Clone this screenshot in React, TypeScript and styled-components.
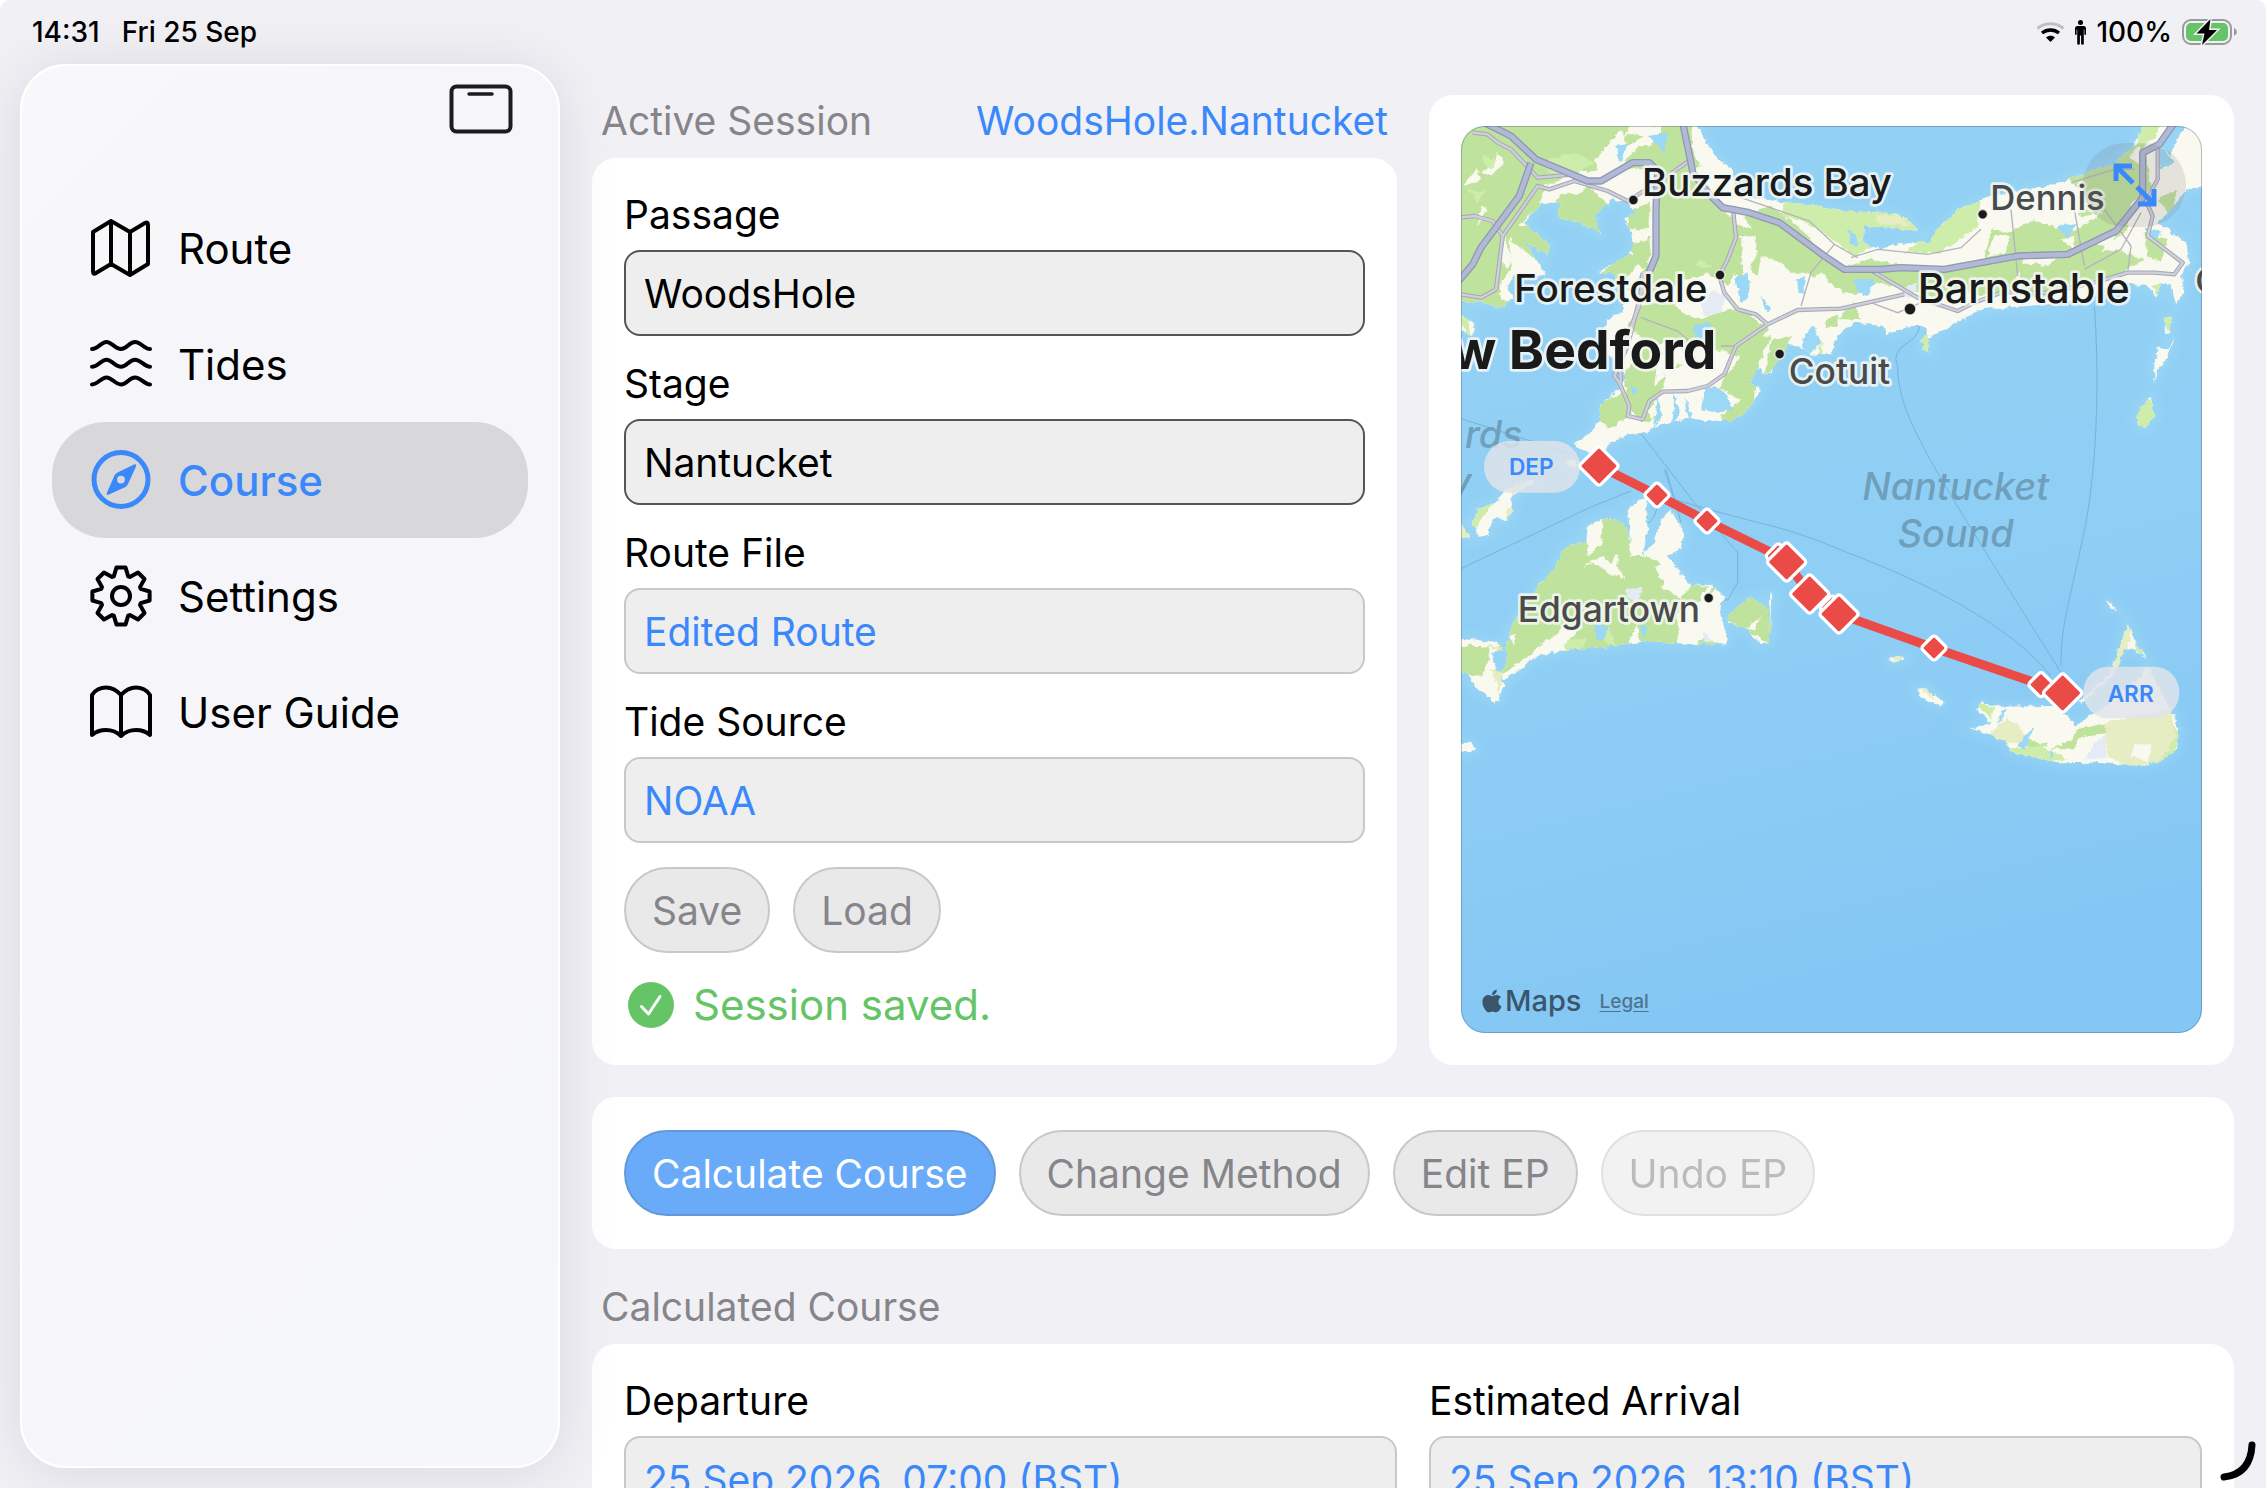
import React from "react";
import styled, { createGlobalStyle, css } from "styled-components";
import { FaApple } from "react-icons/fa6";

const color = {
  page: "#f1f0f5",
  card: "#ffffff",
  blue: "#3b88fa",
  blueFill: "#6aabf9",
  grey: "#85858a",
  field: "#eeeeee",
  button: "#e9e9ea",
  line: "#c8c8ca",
  green: "#64c466",
  red: "#eb4b47",
};

const GlobalStyle = createGlobalStyle`
  *, *::before, *::after { box-sizing: border-box; }
  body {
    margin: 0;
    background: #ffffff;
    color: #000000;
    font-family: "Inter", "Liberation Sans", sans-serif;
    font-size: 39px;
  }
  button, input { font: inherit; }
`;

const Screen = styled.div`
  position: relative;
  display: flex;
  flex-direction: column;
  height: 100vh;
  overflow: hidden;
  background: ${color.page};
  border-radius: 10px 10px 0 0;
`;

const StatusBar = styled.header`
  display: flex;
  flex: none;
  align-items: center;
  justify-content: space-between;
  height: 64px;
  padding: 0 28px 0 32px;
  font-size: 28px;
  font-weight: 500;
`;

const StatusGroup = styled.div<{ $gap: number }>`
  display: flex;
  align-items: center;
  gap: ${(p) => p.$gap}px;
`;

const Shell = styled.div`
  display: grid;
  grid-template-columns: 540px minmax(0, 1fr);
  gap: 32px;
  flex: 1;
  min-height: 0;
  padding: 0 32px 0 20px;
`;

const Sidebar = styled.aside`
  position: relative;
  z-index: 1;
  margin-bottom: 20px;
  padding: 0 30px;
  border: 2px solid #ffffff;
  border-radius: 46px;
  background: linear-gradient(135deg, #f8f8fa 0%, #f5f5fa 40%, #f6f7fb 100%);
  box-shadow: 0 4px 60px rgba(20, 20, 40, 0.1);
`;

const SidebarTop = styled.div`
  display: flex;
  justify-content: flex-end;
  height: 124px;
  padding: 16px 15px 0 0;
`;

const IconButton = styled.button`
  display: block;
  height: 54px;
  padding: 0;
  border: 0;
  background: none;
  cursor: pointer;
`;

const NavItem = styled.a<{ $active?: boolean }>`
  display: flex;
  align-items: center;
  gap: 24px;
  height: 116px;
  padding: 0 36px;
  border-radius: 54px;
  color: #000000;
  font-size: 42px;
  text-decoration: none;
  ${(p) =>
    p.$active &&
    css`
      background: #d8d8da;
      color: ${color.blue};
      font-weight: 500;
    `}
`;

const NavIcon = styled.svg`
  width: 66px;
  height: 66px;
  fill: none;
  stroke: currentColor;
  stroke-width: 4;
  stroke-linecap: round;
  stroke-linejoin: round;
`;

const Main = styled.main`
  display: flex;
  flex-direction: column;
  gap: 32px;
  min-height: 0;
  padding-top: 31px;
`;

const TopRow = styled.div`
  display: grid;
  flex: none;
  grid-template-columns: minmax(0, 1fr) minmax(0, 1fr);
  gap: 32px;
`;

const Section = styled.section`
  display: flex;
  flex: none;
  flex-direction: column;
`;

const SectionHead = styled.div`
  display: flex;
  justify-content: space-between;
  height: 63px;
  padding: 0 9px;
  color: ${color.grey};
  line-height: 52px;
`;

const SectionTitle = styled.h2`
  margin: 0;
  font: inherit;
`;

const SessionName = styled.span`
  color: ${color.blue};
`;

const Card = styled.div`
  display: flex;
  flex-direction: column;
  gap: 24px;
  padding: 32px;
  border-radius: 24px;
  background: ${color.card};
`;

const Fields = styled.div`
  display: flex;
  flex-direction: column;
  gap: 23px;
`;

const FieldColumns = styled.div`
  display: grid;
  grid-template-columns: minmax(0, 1fr) minmax(0, 1fr);
  gap: 32px;
`;

const FieldBox = styled.div`
  display: flex;
  flex-direction: column;
  gap: 10px;
`;

const Label = styled.label`
  line-height: 50px;
`;

const TextInput = styled.input`
  width: 100%;
  height: 86px;
  padding: 0 18px;
  border: 2px solid #555558;
  border-radius: 16px;
  outline: 0;
  background: ${color.field};
  color: #000000;
  &:read-only {
    border-color: ${color.line};
    color: ${color.blue};
  }
`;

const Buttons = styled.div`
  display: flex;
  flex-wrap: wrap;
  gap: 23px;
`;

const PillButton = styled.button<{ $primary?: boolean }>`
  height: 86px;
  padding: 0 26px;
  border: 2px solid ${(p) => (p.$primary ? "#6299d6" : color.line)};
  border-radius: 43px;
  background: ${(p) => (p.$primary ? color.blueFill : color.button)};
  color: ${(p) => (p.$primary ? "#ffffff" : color.grey)};
  cursor: pointer;
  &:disabled {
    opacity: 0.55;
    cursor: default;
  }
`;

const Saved = styled.p`
  display: flex;
  align-items: center;
  gap: 18px;
  margin: 0;
  padding-left: 3px;
  color: ${color.green};
  font-size: 42px;
  line-height: 56px;
`;

const MapCard = styled(Card)`
  padding: 31px 32px 32px;
`;

const ActionCard = styled(Card)`
  flex: none;
  padding: 33px 32px;
`;

const MapFrame = styled.div`
  position: relative;
  flex: 1;
  min-height: 400px;
  overflow: hidden;
  border-radius: 24px;
  background: #8ccdf5;
  &::after {
    content: "";
    position: absolute;
    inset: 0;
    border: 1px solid rgba(60, 80, 100, 0.35);
    border-radius: 24px;
    pointer-events: none;
  }
`;

const MapDrawing = styled.svg`
  position: absolute;
  inset: 0;
  width: 100%;
  height: 100%;
`;

const ExpandButton = styled.button`
  position: absolute;
  top: 17px;
  right: 16px;
  display: grid;
  place-items: center;
  width: 103px;
  height: 84px;
  padding: 0;
  border: 0;
  border-radius: 42px;
  background: rgba(110, 110, 120, 0.16);
  cursor: pointer;
`;

const MapCredit = styled.div`
  position: absolute;
  bottom: 12px;
  left: 18px;
  display: flex;
  align-items: center;
  gap: 18px;
  color: #3a566b;
`;

const MapBrand = styled.span`
  display: flex;
  align-items: center;
  font-size: 29px;
  font-weight: 500;
  line-height: 40px;
`;

const LegalLink = styled.a`
  color: #4d748e;
  font-size: 19px;
  font-weight: 500;
  text-underline-offset: 3px;
`;

const CornerMark = styled.svg`
  position: absolute;
  right: 6px;
  bottom: 4px;
`;

const gearPath = (() => {
  const at = (deg: number, r: number) => {
    const a = (deg * Math.PI) / 180;
    return `${(33 + r * Math.sin(a)).toFixed(1)} ${(33 - r * Math.cos(a)).toFixed(1)}`;
  };
  const pts: string[] = [];
  for (let t = 0; t < 360; t += 45) {
    pts.push(at(t - 9, 29), at(t + 9, 29), at(t + 20, 21), at(t + 25, 21));
  }
  return `M${pts.join("L")}Z`;
})();

const navItems = [
  {
    name: "Route",
    icon: <path d="M5 17 23 6 42 17 57 8Q60 6.500 60 10V49L42 60 23 49 8 58Q5 60 5 56ZM23 6V49M42 17V60" />,
  },
  {
    name: "Tides",
    icon: (
      <>
        {[3, 20.7, 38.4].map((y) => (
          <path key={y} transform={`translate(0 ${y})`} d="M4 15C10 15 13 8 18.500 8S27 15 33 15S41 8 47 8S56 15 62 15" />
        ))}
      </>
    ),
  },
  {
    name: "Course",
    active: true,
    icon: (
      <>
        <circle cx="33" cy="32.5" r="27" strokeWidth="5" />
        <path
          fill="currentColor"
          stroke="none"
          fillRule="evenodd"
          d="M46 17.500Q49 16.500 48 19.500L40 37Q39 39 37.500 40L21 47.500Q17.500 49 19 45.500L26.500 28.500Q27.500 26.500 29.500 25.500ZM33 28.700A3.900 3.900 0 1 0 33 36.500A3.900 3.900 0 1 0 33 28.700Z"
        />
      </>
    ),
  },
  {
    name: "Settings",
    icon: (
      <>
        <path d={gearPath} />
        <circle cx="33" cy="33" r="9" />
      </>
    ),
  },
  {
    name: "User Guide",
    icon: (
      <path d="M33 16C28 10.500 23 8.500 18 8.500S7 11 4 16V56C8 52.500 13 51 18 51S29 53 33 57C37 53 43 51 48 51S58 52.500 62 56V16C59 11 53 8.500 48 8.500S38 10.500 33 16ZM33 16V57" />
    ),
  },
];

function WifiIcon() {
  return (
    <svg width="29" height="20" viewBox="0 0 29 20" fill="none" aria-label="Wi-Fi">
      <path d="M1.500 6.500C9 .3 20 .3 27.500 6.500" stroke="#bfbfc4" strokeWidth="3" />
      <path d="M6 11C11 7 18 7 23 11" stroke="#000" strokeWidth="3.500" />
      <path d="M14.500 20 10 15.500C12.500 13.300 16.500 13.300 19 15.500Z" fill="#000" />
    </svg>
  );
}

function PersonIcon() {
  return (
    <svg width="11" height="25" viewBox="0 0 11 25" aria-label="Focus">
      <circle cx="5.500" cy="2.500" r="2.500" />
      <path d="M2.500 6H8.500Q11 6 11 8.500V14Q11 15 10.200 15T9.400 14V9.500H8.800V23.500Q8.800 24.800 7.500 24.800T6.100 23.500V15.500H4.900V23.500Q4.900 24.800 3.500 24.800T2.200 23.500V9.500H1.600V14Q1.600 15 .8 15T0 14V8.500Q0 6 2.500 6Z" />
    </svg>
  );
}

function BatteryIcon() {
  return (
    <svg width="56" height="28" viewBox="0 0 56 28" aria-label="Battery charging">
      <rect x="1" y="2" width="48" height="24" rx="8" fill="none" stroke="#9b9b9f" strokeWidth="2" />
      <path d="M52 10Q55 11.500 55 14T52 18Z" fill="#9b9b9f" />
      <rect x="4" y="5" width="42" height="18" rx="5" fill={color.green} />
      <path d="M28.500 1 14.500 15.500H22.500L20 27 35 12H27Z" fill="#000" stroke={color.page} strokeWidth="3" paintOrder="stroke" />
    </svg>
  );
}

const land = "#faf9ef";
const wood = "#bfe29c";
const park = "#cfedaa";
const sand = "#e7edc2";
const water = "#9bd8f6";

const MotorwayEdge = styled.path`
  fill: none;
  stroke: #8f98b6;
  stroke-width: 22;
  stroke-linejoin: round;
`;
const MotorwayFill = styled.path`
  fill: none;
  stroke: #b2b9d5;
  stroke-width: 14;
  stroke-linejoin: round;
`;
const RoadEdge = styled.path`
  fill: none;
  stroke: #a5a7b5;
  stroke-width: 13;
  stroke-linejoin: round;
`;
const RoadFill = styled.path`
  fill: none;
  stroke: #cfd0dc;
  stroke-width: 7;
  stroke-linejoin: round;
`;
const LaneLine = styled.path`
  fill: none;
  stroke: #b3b4bf;
  stroke-width: 4;
`;
const FerryLine = styled.path`
  fill: none;
  stroke: #76b3d8;
  stroke-width: 3;
`;

const motorways = [
  "M70-10 150 30 225 100 380 165 420 165 515 110 565 110 590 135 585 250V390L560 450",
  "M-20 480 35 415 60 365 175 210 210 110",
  "M665-10 690 110 695 140 745 205 785 245 865 260 955 290 1090 390 1150 430 1260 430 1320 425 1450 430 1670 390 1820 385 1965 315 2045 215V80L2095 55 2140-10",
];
const roads = [
  "M35 20 80 25 110 50 150 70 230 155 340 145",
  "M690 100 620 150 500 225 440 195 340 165 265 190 230 180 125 330 105 490 60 515 0 505",
  "M-10 275 40 270 95 285 125 330",
  "M815 240 825 335 800 400 775 450 790 500 830 550 885 565 920 595",
  "M560 440 530 540 500 660 460 750 475 770 505 840 500 870 545 880 565 825 605 797 680 795 740 780 790 745 825 660 920 595 1010 552 1140 548 1330 505",
  "M545 440 535 540 475 690 480 770",
  "M1225 430 1370 515 1490 555 1540 530 1620 500 1760 500 1900 470 2000 440 2080 440 2140 445 2165 410 2060 330 2075 270 2055 225 2090 160V60",
];
const lanes = [
  "M840 215 1045 285 1120 355 1190 395M540 575 650 615 690 650M1120 355 1050 440 1020 540M780 660 825 660",
  "M1170 395 1250 370 1400 385 1500 365 1560 310M1650 250 1670 450M1870 420 1840 250M1930 250 2010 360 2000 440M2040 260 1980 370 1870 430M1830 170 1960 130 2020 130M1230 530 1310 560 1380 530",
];
const ferries = [
  "M1370 570Q1390 620 1340 650T1310 720C1310 870 1400 1000 1800 1640",
  "M1900 540C1920 820 1900 1100 1860 1260 1820 1450 1800 1500 1800 1620",
  "M545 870 530 910 700 1130 830 1280V1370L800 1422H770",
  "M0 878 350 990M0 1328 385 1145 510 1095",
  "M610 1030 640 1120C900 1200 950 1190 1160 1280 1400 1370 1650 1500 1770 1650",
  "M615 1030 660 1190M590 1120Q590 1180 550 1200",
];

const landShapes = [
  // Mainland, canal and the whole of the cape
  "M-20-20H700L737 50 767 97 812 127 817 160 837 205 937 225 1077 240 1160 256 1300 262 1340 280 1375 315 1280 305 1210 300 1200 350 1260 370 1310 355 1400 348 1437 302 1497 247 1577 215 1640 200 1717 190 1797 168 1877 140 1957 115 2007 70 2040 20 2050-20H2130L2100 60 2130 90 2150 30 2180 0 2230-20V180L2180 190 2130 250 2090 290 2120 310 2175 350 2185 410 2160 450 2170 500 2145 535 2130 480 2100 470 2090 515 2057 480 1997 472 1937 490 1877 520 1800 530 1700 540 1557 550 1507 578 1450 610 1400 635 1395 600 1347 600 1277 625 1265 600 1180 590 1130 630 1110 680 1060 690 1030 670 980 655 930 740 910 750 895 720 865 770 900 790 865 850 810 885 737 885 680 875 580 900 560 920 500 925 440 960 400 985 360 970 340 955 380 930 415 885 417 840 460 800 497 760 480 720 440 680 427 620 440 580 480 560 500 520 455 440 410 440 480 400 517 370 510 320 490 280 527 260 500 230 455 220 400 270 420 325 360 290 290 275 300 230 240 230 190 290 270 360 260 385 190 350 225 400 255 445 225 450 165 440 140 480 155 520 115 545 70 530-20 525Z",
  // Small headland on the western edge
  "M-20 570 25 580 45 610 30 630-20 600Z",
  // Elizabeth islands
  "M35 1190 50 1150 100 1130 150 1080 230 1060 150 1110 155 1160 135 1185 100 1170 80 1230 45 1225ZM-20 1190 5 1195 25 1235-20 1232ZM305 1010 350 1000 345 1030Z",
  // Martha's Vineyard
  "M137 1620 135 1570 150 1500 240 1370 280 1330 305 1275 355 1245 375 1250 380 1200 420 1180 460 1180 490 1195 510 1245 500 1150 540 1120 555 1115 560 1220 545 1290 590 1230 600 1180 630 1150 655 1190 667 1220 660 1270 620 1290 650 1330 690 1380 750 1375 790 1410 775 1450 800 1540 795 1555 700 1555 560 1545 450 1560 330 1570 230 1590 180 1630 130 1660 110 1640Z",
  "M800 1480 815 1455 870 1410 920 1450 925 1550 890 1550 860 1510 800 1490ZM-20 1545 40 1540 125 1555 125 1575 90 1580 100 1615 130 1680 115 1710-20 1620ZM20 1640 120 1710 105 1730 40 1680Z",
  "M928 1400 934 1400 930 1520 924 1520ZM-20 1850 30 1850 42 1872-20 1880Z",
  // Nantucket and its islets
  "M1545 1750 1560 1730 1620 1742 1780 1740 1830 1780 1840 1800 1920 1750 1980 1700 2040 1650 2062 1620 2080 1660 2130 1750 2155 1810 2145 1870 2110 1900 2050 1920 1900 1910 1790 1912 1730 1895 1660 1880 1620 1840 1530 1808 1590 1790Z",
  "M2000 1495 2020 1540 2057 1600 2020 1570 1990 1570 1960 1640 1860 1735 1850 1730 1950 1640ZM1932 1418 1968 1452 1950 1448ZM1285 1600 1315 1590 1332 1602 1290 1612ZM1365 1692 1395 1685 1450 1730 1435 1742 1390 1720Z",
  // Monomoy
  "M2110 580 2130 575 2125 625 2112 620ZM2140 630 2115 700 2085 740 2080 775 2080 720 2090 665 2120 670ZM2070 810 2080 870 2050 910 2025 890 2035 850Z",
  // Point south of Hyannis
  "M1380 640 1400 615 1440 610 1400 640 1405 680 1385 670Z",
];

const woodShapes = [
  "M-30-30H520L490 30 450 60 440 120 380 140 330 120 300 160 250 180 235 240 180 290 145 340 150 430 115 480 120 520 160 530 130 560-30 550Z",
  "M500 20 560 30 600-30H700L690 60 720 120 640 160 560 130 500 130 480 70Z",
  "M580 140 700 140 770 240 822 280 840 400 800 480 740 460 700 490 600 480 560 530 500 490 560 420 580 380Z",
  "M815 290 870 310 850 270 930 240 1020 310 1100 400 1160 420 1220 400 1420 430 1360 490 1240 470 1190 510 1130 490 1080 440 1020 480 960 410 900 390 890 450 820 450Z",
  "M540 540 620 520 680 570 720 580 800 550 860 560 920 610 860 700 800 680 720 660 660 690 620 650 560 660 500 600Z",
  "M490 740 560 650 630 690 570 740 620 710 680 720 700 690 750 740 710 790 640 770 590 810 600 870 545 890 500 840Z",
  "M820 720 870 640 930 630 890 720 880 800 880 910 790 910 780 870 840 820 800 800 750 780Z",
  "M420 830 490 800 510 860 450 910 410 880Z",
  "M265 240 310 200 350 210 380 180 450 240 430 310 400 330 350 300 290 300ZM150 300 240 300 290 365 240 410 150 345ZM410 450 500 380 540 400 490 470Z",
  "M510 250 570 230 560 310 500 310ZM510 350 570 330 560 430 510 410Z",
  "M1270 430 1440 440 1600 410 1690 390 1650 500 1560 510 1500 490 1440 520 1340 490Z",
  "M1590 310 1640 320 1720 280 1830 320 1900 280 1960 230 2020 190 2000 310 1910 380 1760 390 1660 400 1570 410Z",
  "M1770 120 1880 100 1960 80 2050 50 2070 190 1980 250 1850 270 1870 200Z",
  "M1670 410 1760 420 1800 390 1960 370 2050 400 1970 450 1860 470 1760 520 1690 510Z",
  "M1070 490 1125 470 1130 600 1095 610ZM930 640 990 630 960 710 910 750ZM1130 580 1180 530 1200 580Z",
  "M2050 320 2120 340 2100 410 2060 390ZM2090 220 2150 190 2130 270Z",
  "M100 1660 120 1500 220 1350 260 1310 300 1260 370 1230 390 1280 410 1190 460 1160 500 1190 510 1290 560 1290 620 1330 600 1380 660 1420 690 1380 740 1380 720 1420 650 1460 650 1530 640 1570 540 1570 530 1490 490 1580 350 1580 330 1560 310 1500 250 1550 190 1600Z",
  "M790 1480 870 1400 930 1440 930 1560 870 1520ZM-30 1560 80 1560 85 1600 60 1650-30 1640Z",
  "M1680 1850 1740 1820 1760 1860 1720 1870ZM1850 1810 1940 1790 1950 1820 1860 1830 1840 1870 1770 1870 1830 1840Z",
  "M725 1420 760 1370 800 1380 740 1400ZM690 1560 740 1530 790 1570Z",
];

const parkShapes = [
  "M980 200 1200 230 1400 260 1400 360 1290 330 1180 390 1130 350 1040 290 960 270Z",
  "M1430 310 1500 240 1560 210 1550 300 1440 380 1330 380 1400 330Z",
  "M260 100 340 80 400 110 340 145 260 140ZM60 90 110 100 90 150ZM20 190 70 200 50 230Z",
  "M700 420 720 400 760 430ZM2030-10 2110-30 2080 40 2030 60ZM2070 480 2100 470 2095 510Z",
  "M1540 1730 1600 1742 1590 1780ZM1620 1870 1740 1860 1820 1900 1700 1920ZM2120 1780 2160 1820 2130 1900 2060 1930Z",
  "M2100 570 2140 570 2125 625ZM2060 800 2090 870 2050 920 2015 890ZM30 1220 40 1150 110 1120 60 1180ZM2020 1520 2060 1600 2025 1570Z",
  "M1080 640 1090 730 1070 690ZM1400 700 1450 730 1435 742ZM1375 650 1395 610 1410 680 1385 680ZM-20 560 20 570 30 640Z",
  "M330 1600 300 1540 380 1540ZM420 1540 440 1500 470 1570Z",
];

const creamShapes = [
  "M110 80 130 110 90 150 60 140 100 120ZM50 130 60 160 10 180 20 160ZM60 240 80 250 50 300Z",
  "M400 100 440 60 480 10 500 60 560 20 600-10 600 40 560 60 540 60 470 120 420 140Z",
  "M450 190 520 170 530 230 470 240ZM515 330 560 310 560 340 530 350Z",
  "M130 330 150 400 140 430 120 400ZM650 470 740 440 800 480 790 530 700 520Z",
  "M840 330 880 330 890 380 870 420 900 500 960 440 1040 440 1150 500 1140 560 1060 600 990 620 930 620 890 560 850 540Z",
  "M1020 290 1100 340 1110 380 1060 350Z",
  "M590 690 650 660 680 700 640 720 610 750 580 780ZM620 730 780 690 800 740 770 800 700 850 610 840 570 880 560 860 600 800Z",
  "M377 1290 400 1195 425 1180 420 1260ZM365 1320 420 1290 450 1310 470 1280 470 1320 495 1362 440 1340 400 1310Z",
  "M580 1320 630 1310 620 1360 640 1410 610 1380ZM720 1400 790 1410 770 1440 785 1500 760 1550 720 1520Z",
  "M240 1550 330 1510 370 1500 300 1560 250 1580ZM140 1530 165 1525 160 1560ZM860 1505 900 1470 880 1510Z",
  "M1600 1745 1770 1742 1830 1800 1800 1860 1720 1850 1660 1790ZM2020 1850 2070 1860 2060 1910 2010 1890Z",
  "M1600 330 1650 330 1630 380 1580 390ZM1800 340 1840 330 1840 370ZM1900 350 1960 330 1950 370ZM2000 90 2040 60 2040 120Z",
];

const sandShapes = [
  "M1640 1770 1720 1790 1700 1850 1650 1850 1600 1880 1580 1830ZM1930 1790 2130 1750 2145 1830 2100 1900 2020 1930 1940 1890Z",
  "M2000 1490 2010 1540 1960 1640 1960 1580ZM1280 1590 1325 1590 1320 1612ZM1360 1680 1405 1690 1420 1720Z",
  "M90 1630 130 1640 115 1700ZM110 1560 125 1575 60 1560ZM1240 265 1320 270 1350 300 1260 295Z",
  "M150 1080 210 1060 150 1110ZM135 1150 160 1140 140 1190ZM-20 1180 30 1190 30 1240-20 1240Z",
];

const pondShapes = [
  "M820 460 860 440 865 510 840 530ZM1005 460 1035 450 1030 500 1010 505ZM700 600 740 590 760 630 700 640Z",
  "M1180 460 1240 460 1220 510 1190 500ZM1160 310 1190 330 1190 365 1170 350ZM900 510 930 550 915 560Z",
  "M730 790 760 780 790 800 820 850 770 860 720 850ZM1020 640 1060 600 1080 650 1040 690Z",
  "M590 810 605 870 580 900ZM640 800 655 870 635 890ZM670 810 690 860 680 880ZM505 770 530 790 520 810Z",
  "M1790 300 1850 290 1820 340ZM2050 300 2100 320 2080 350ZM2090 50 2140 110 2100 130ZM1900 500 1960 480 1980 500Z",
  "M1620 1760 1640 1750 1610 1800ZM1720 1800 1690 1870 1670 1860 1710 1810ZM1765 1880 1775 1860 1770 1900Z",
  "M400 1490 410 1545 430 1540 440 1500ZM535 1500 550 1545 560 1500ZM460 60 500 50 480 110ZM560 30 620 20 610 80Z",
];

const cities = [
  { name: "Buzzards Bay", x: 543, y: 210, size: 115, fill: "#1a1a1a" },
  { name: "Forestdale", x: 159, y: 527, size: 116, fill: "#1a1a1a" },
  { name: "w Bedford", x: 766, y: 730, size: 160, fill: "#1a1a1a", weight: 700, end: true },
  { name: "Cotuit", x: 983, y: 774, size: 106, fill: "#4a4a4a" },
  { name: "Dennis", x: 1588, y: 252, size: 104, fill: "#4a4a4a" },
  { name: "Barnstable", x: 1370, y: 532, size: 124, fill: "#1a1a1a" },
  { name: "Edgartown", x: 170, y: 1487, size: 106, fill: "#4a4a4a" },
  { name: "C", x: 2203, y: 500, size: 104, fill: "#4a4a4a" },
];

const cityDots = [
  [517, 222, 15],
  [777, 447, 15],
  [956, 684, 15],
  [1565, 265, 15],
  [1347, 549, 18],
  [743, 1416, 15],
];

const waypoints = [
  { x: 588, y: 1107 },
  { x: 738, y: 1185 },
  { x: 952, y: 1290 },
  { x: 1114, y: 1446 },
  { x: 1419, y: 1566 },
  { x: 1740, y: 1676 },
  { x: 414, y: 1020, major: true },
  { x: 977, y: 1308, major: true },
  { x: 1046, y: 1404, major: true },
  { x: 1134, y: 1464, major: true },
  { x: 1805, y: 1701, major: true },
];

const SeaNames = styled.g`
  fill: #709fbb;
  font-size: 113px;
  font-style: italic;
  font-weight: 500;
`;

function RouteMap() {
  return (
    <MapDrawing viewBox="0 0 2223 2721" preserveAspectRatio="xMinYMin slice" role="img" aria-label="Route map">
      <defs>
        <linearGradient id="sea" x1="0" y1="0" x2="0.2" y2="1">
          <stop offset="0" stopColor="#93d1f4" />
          <stop offset="0.55" stopColor="#90cff5" />
          <stop offset="1" stopColor="#85c7f4" />
        </linearGradient>
        <filter id="coast" x="-5%" y="-5%" width="110%" height="110%">
          <feTurbulence type="fractalNoise" baseFrequency="0.05" numOctaves="3" seed="7" />
          <feDisplacementMap in="SourceGraphic" scale="18" xChannelSelector="R" yChannelSelector="G" />
        </filter>
        <filter id="soft" x="-20%" y="-20%" width="140%" height="140%">
          <feGaussianBlur stdDeviation="16" />
        </filter>
        <clipPath id="shore">
          {landShapes.map((d) => (
            <path key={d} d={d} />
          ))}
        </clipPath>
      </defs>
      <rect width="2223" height="2721" fill="url(#sea)" />
      <g filter="url(#soft)" fill="#a0daf5" stroke="#a0daf5" strokeWidth="30" opacity="0.5">
        {landShapes.map((d) => (
          <path key={d} d={d} />
        ))}
      </g>
      {ferries.map((d) => (
        <FerryLine key={d} d={d} />
      ))}
      <g filter="url(#coast)">
        <path d={landShapes.join("")} fill={land} />
        <g clipPath="url(#shore)">
          <path d={woodShapes.join("")} fill={wood} />
          <path d={parkShapes.join("")} fill={park} />
          <path d={sandShapes.join("")} fill={sand} />
          <path d={creamShapes.join("")} fill={land} />
          <path d={pondShapes.join("")} fill={water} />
          <path
            d="M720 530 755 490 795 510 780 560 725 570ZM1310 490 1370 470 1350 520ZM495 1390 545 1385 530 1430 500 1420ZM1870 1900 1900 1850 1935 1830V1895ZM730 1520 760 1545 725 1550Z"
            fill="#e4ebf6"
          />
        </g>
      </g>
      {lanes.map((d) => (
        <LaneLine key={d} d={d} />
      ))}
      {roads.map((d) => (
        <RoadEdge key={d} d={d} />
      ))}
      {roads.map((d) => (
        <RoadFill key={d} d={d} />
      ))}
      {motorways.map((d) => (
        <MotorwayEdge key={d} d={d} />
      ))}
      {motorways.map((d) => (
        <MotorwayFill key={d} d={d} />
      ))}

      <SeaNames>
        <text x="1484" y="1122" textAnchor="middle">Nantucket</text>
        <text x="1484" y="1264" textAnchor="middle">Sound</text>
        <text x="184" y="965" textAnchor="end">rds</text>
        <text x="32" y="1106" textAnchor="end">y</text>
      </SeaNames>
      {cityDots.map(([x, y, r]) => (
        <circle key={x} cx={x} cy={y} r={r} fill="#1a1a1a" stroke="#fff" strokeOpacity="0.7" strokeWidth="5" />
      ))}
      {cities.map((c) => (
        <text
          key={c.name}
          x={c.x}
          y={c.y}
          fontSize={c.size}
          fontWeight={c.weight ?? 500}
          textAnchor={c.end ? "end" : "start"}
          fill={c.fill}
          stroke="#f4f8f4"
          strokeOpacity="0.85"
          strokeWidth="16"
          strokeLinejoin="round"
          paintOrder="stroke"
        >
          {c.name}
        </text>
      ))}

      <path
        d="M414 1020 588 1107 738 1185 952 1290 977 1308 1046 1404 1134 1464 1419 1566 1740 1676 1805 1701"
        fill="none"
        stroke={color.red}
        strokeWidth="27"
      />
      <g fontSize="68" fontWeight="600" textAnchor="middle">
        <rect x="69" y="945" width="288" height="155" rx="76" fill="#dfe4ea" fillOpacity="0.84" />
        <text x="211" y="1047" fill={color.blue}>DEP</text>
        <rect x="1867" y="1622" width="288" height="155" rx="76" fill="#dfe4ea" fillOpacity="0.84" />
        <text x="2009" y="1728" fill={color.blue}>ARR</text>
      </g>
      {waypoints.map((w) => {
        const s = w.major ? 43 : 28;
        return (
          <rect
            key={w.x}
            x={w.x - s}
            y={w.y - s}
            width={s * 2}
            height={s * 2}
            rx="9"
            transform={`rotate(45 ${w.x} ${w.y})`}
            fill={color.red}
            stroke="#fff"
            strokeWidth="10"
          />
        );
      })}
    </MapDrawing>
  );
}

function Field({ id, label, value, editable }: { id: string; label: string; value: string; editable?: boolean }) {
  return (
    <FieldBox>
      <Label htmlFor={id}>{label}</Label>
      <TextInput id={id} type="text" defaultValue={value} readOnly={!editable} />
    </FieldBox>
  );
}

export default function App() {
  return (
    <>
      <GlobalStyle />
      <Screen>
        <StatusBar>
          <StatusGroup $gap={22}>
            <span>14:31</span>
            <span>Fri 25 Sep</span>
          </StatusGroup>
          <StatusGroup $gap={10}>
            <WifiIcon />
            <PersonIcon />
            <span>100%</span>
            <BatteryIcon />
          </StatusGroup>
        </StatusBar>

        <Shell>
          <Sidebar>
            <SidebarTop>
              <IconButton type="button" aria-label="Toggle sidebar">
                <svg width="64" height="54" viewBox="0 0 64 54" fill="none" stroke="#1c1b20" strokeWidth="4" strokeLinecap="round">
                  <rect x="2.500" y="4.500" width="59" height="45" rx="5" />
                  <path d="M20 12H43" strokeWidth="3.500" />
                </svg>
              </IconButton>
            </SidebarTop>
            <nav>
              {navItems.map((n) => (
                <NavItem key={n.name} href="#" $active={n.active} aria-current={n.active ? "page" : undefined}>
                  <NavIcon viewBox="0 0 66 66" aria-hidden="true">
                    {n.icon}
                  </NavIcon>
                  {n.name}
                </NavItem>
              ))}
            </nav>
          </Sidebar>

          <Main>
            <TopRow>
              <Section>
                <SectionHead>
                  <SectionTitle>Active Session</SectionTitle>
                  <SessionName>WoodsHole.Nantucket</SessionName>
                </SectionHead>
                <Card>
                  <Fields>
                    <Field id="passage" label="Passage" value="WoodsHole" editable />
                    <Field id="stage" label="Stage" value="Nantucket" editable />
                    <Field id="route-file" label="Route File" value="Edited Route" />
                    <Field id="tide-source" label="Tide Source" value="NOAA" />
                  </Fields>
                  <Buttons>
                    <PillButton type="button">Save</PillButton>
                    <PillButton type="button">Load</PillButton>
                  </Buttons>
                  <Saved role="status">
                    <svg width="48" height="48" viewBox="0 0 48 48" aria-hidden="true">
                      <circle cx="24" cy="24" r="23" fill={color.green} />
                      <path d="M14.500 25.500 21.500 33 33 15.500" fill="none" stroke="#fff" strokeWidth="3" strokeLinecap="round" strokeLinejoin="round" />
                    </svg>
                    Session saved.
                  </Saved>
                </Card>
              </Section>
              <MapCard>
                <MapFrame>
                  <RouteMap />
                  <ExpandButton type="button" aria-label="Expand map">
                    <svg width="44" height="44" viewBox="0 0 44 44" fill="none" stroke={color.blue} strokeWidth="5" aria-hidden="true">
                      <path d="M3 18V3H19M3 3 20 20M41 26V41H25M41 41 24 24" />
                    </svg>
                  </ExpandButton>
                  <MapCredit>
                    <MapBrand>
                      <FaApple size={26} aria-label="Apple" />
                      Maps
                    </MapBrand>
                    <LegalLink href="#">Legal</LegalLink>
                  </MapCredit>
                </MapFrame>
              </MapCard>
            </TopRow>

            <ActionCard>
              <Buttons>
                <PillButton type="button" $primary>
                  Calculate Course
                </PillButton>
                <PillButton type="button">Change Method</PillButton>
                <PillButton type="button">Edit EP</PillButton>
                <PillButton type="button" disabled>
                  Undo EP
                </PillButton>
              </Buttons>
            </ActionCard>

            <Section>
              <SectionHead>
                <SectionTitle>Calculated Course</SectionTitle>
              </SectionHead>
              <Card>
                <FieldColumns>
                  <Field id="departure" label="Departure" value="25 Sep 2026, 07:00 (BST)" />
                  <Field id="arrival" label="Estimated Arrival" value="25 Sep 2026, 13:10 (BST)" />
                </FieldColumns>
              </Card>
            </Section>
          </Main>
        </Shell>

        <CornerMark width="42" height="44" viewBox="0 0 42 44" fill="none" aria-hidden="true">
          <path d="M34 5C33 24 24 35 6 37" stroke="#000" strokeWidth="7" strokeLinecap="round" />
        </CornerMark>
      </Screen>
    </>
  );
}
